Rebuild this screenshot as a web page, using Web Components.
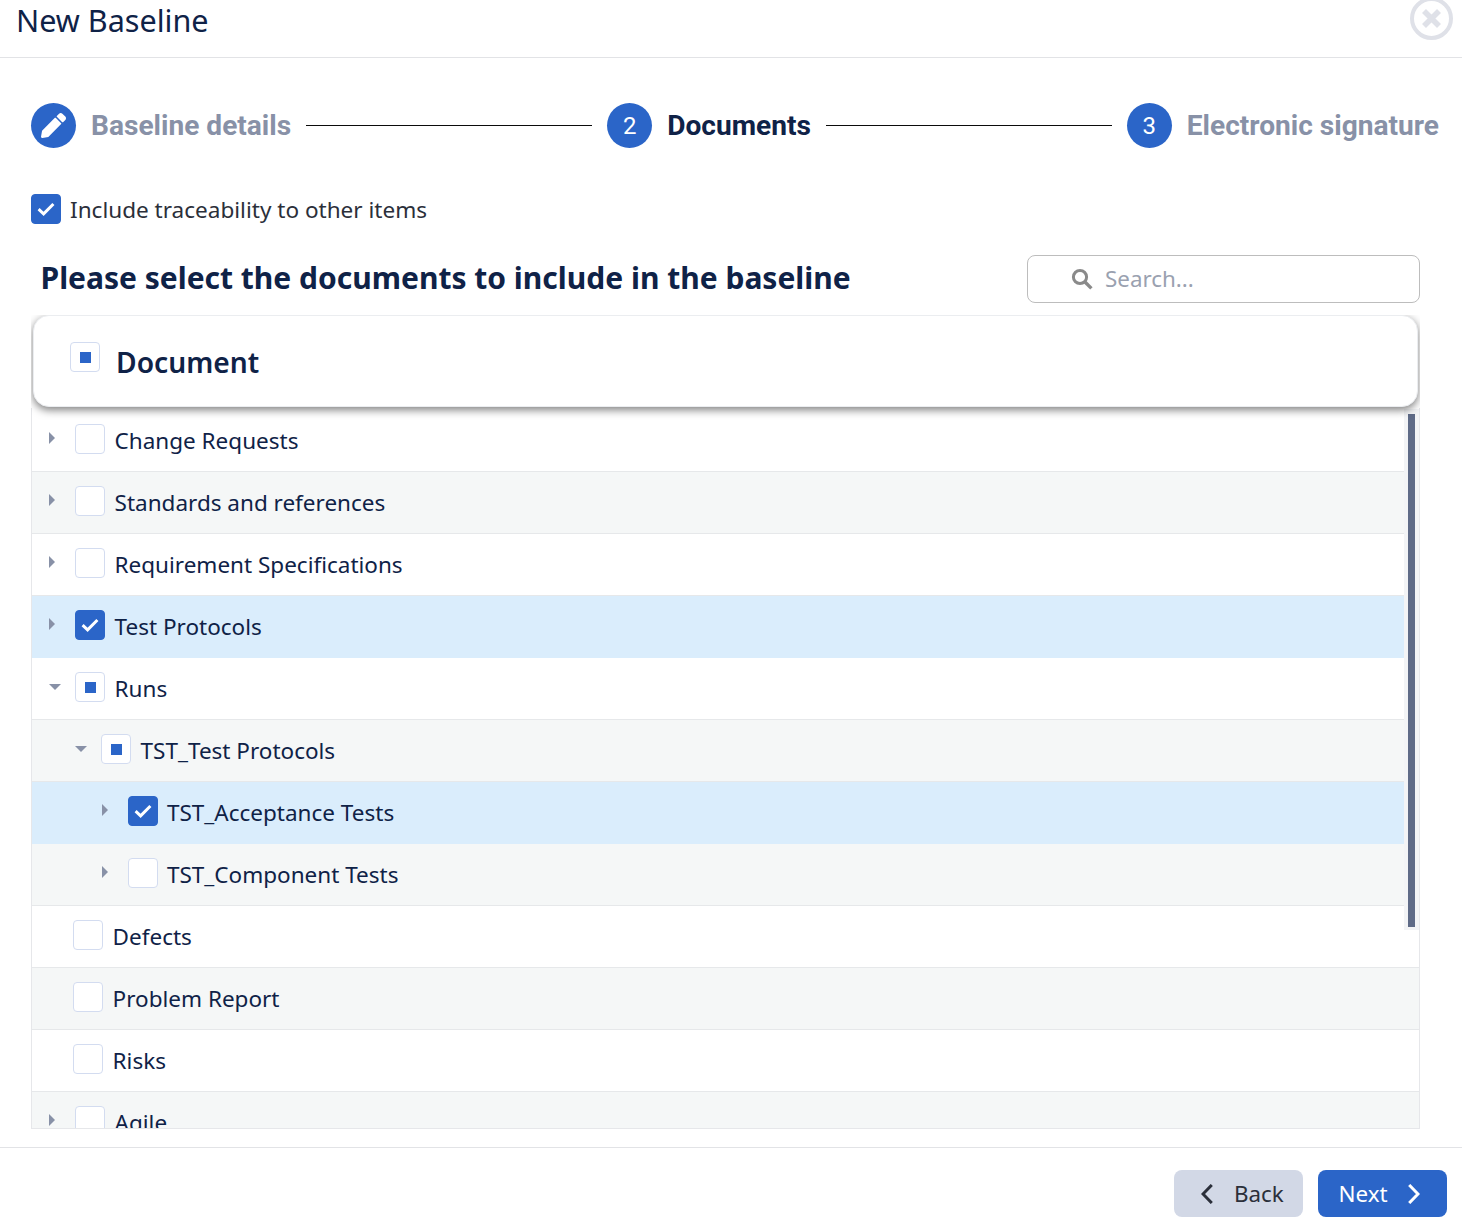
<!DOCTYPE html>
<html lang="en">
<head>
<meta charset="utf-8">
<title>New Baseline</title>
<style>
html,body{margin:0;padding:0;background:#fff}
body{font-family:"Noto Sans",sans-serif;color:#0f2247;width:1462px;height:1224px;overflow:hidden}
</style>
</head>
<body>
<bl-dialog>
  <bl-header slot="header">New Baseline</bl-header>
  <bl-stepper slot="stepper">
    <bl-step icon="pen">Baseline details</bl-step>
    <bl-step num="2" active>Documents</bl-step>
    <bl-step num="3">Electronic signature</bl-step>
  </bl-stepper>
  <bl-trace slot="trace">Include traceability to other items</bl-trace>
  <bl-title slot="title">Please select the documents to include in the baseline</bl-title>
  <bl-table slot="table">
    <bl-row caret="right" pad="17" state="none">Change Requests</bl-row>
    <bl-row caret="right" pad="17" state="none" tone="gray">Standards and references</bl-row>
    <bl-row caret="right" pad="17" state="none">Requirement Specifications</bl-row>
    <bl-row caret="right" pad="17" state="checked" tone="blue">Test Protocols</bl-row>
    <bl-row caret="down" pad="17" state="mixed">Runs</bl-row>
    <bl-row caret="down" pad="43" state="mixed" tone="gray">TST_Test Protocols</bl-row>
    <bl-row caret="right" pad="70" state="checked" tone="blue" gap="9">TST_Acceptance Tests</bl-row>
    <bl-row caret="right" pad="70" state="none" tone="gray" gap="9">TST_Component Tests</bl-row>
    <bl-row pad="41" state="none" wide>Defects</bl-row>
    <bl-row pad="41" state="none" tone="gray" wide>Problem Report</bl-row>
    <bl-row pad="41" state="none" wide>Risks</bl-row>
    <bl-row caret="right" pad="17" state="none" tone="gray" wide>Agile</bl-row>
  </bl-table>
  <bl-footer slot="footer"></bl-footer>
</bl-dialog>
<script>
const def=(name,css,html)=>{
  customElements.define(name,class extends HTMLElement{
    constructor(){super();this.attachShadow({mode:'open'});}
    connectedCallback(){
      this.shadowRoot.innerHTML=`<style>${css}</style>${typeof html==='function'?html(this):html}`;
    }
  });
};
const CHECK=`<svg width="18" height="14" viewBox="0 0 18 14" fill="none"><path d="M1.6 7.2l5 4.6L16.4 2" stroke="#fff" stroke-width="3"/></svg>`;

def('bl-check',`
:host{display:block;flex:none;width:30px;height:30px}
.b{box-sizing:border-box;width:30px;height:30px;border-radius:4px;border:1px solid #d3dcf0;background:#fff;display:flex;align-items:center;justify-content:center}
.checked{background:#2b65c8;border-color:#2b65c8}
.mixed i{display:block;width:11px;height:11px;background:#2b65c8}
`,h=>{const s=h.getAttribute('state')||'none';return `<div class="b ${s}">${s==='checked'?CHECK:s==='mixed'?'<i></i>':''}</div>`});

def('bl-dialog',`
:host{display:flex;flex-direction:column;height:1224px;position:relative;overflow:hidden}
.top{flex:none}
.body{flex:1;min-height:0;display:flex;flex-direction:column;padding:0 42px 0 31px}
.foot{flex:none}
`,`<div class="top"><slot name="header"></slot></div>
<div class="body"><slot name="stepper"></slot><slot name="trace"></slot><slot name="title"></slot><slot name="table"></slot></div>
<div class="foot"><slot name="footer"></slot></div>`);

def('bl-header',`
:host{display:block;box-sizing:border-box;height:58px;border-bottom:1px solid #e2e3e6;position:relative;padding-left:16px}
.t{font-size:30.55px;line-height:41px;font-weight:400;color:#0f2247;white-space:nowrap}
svg{position:absolute;left:1409px;top:-4px}
`,`<div class="t"><slot></slot></div>
<svg width="45" height="46" viewBox="0 0 45 46" fill="none"><circle cx="22.5" cy="22.5" r="19.5" stroke="#dfe1e8" stroke-width="4"/><path d="M15 15l15 15M30 15L15 30" stroke="#dfe1e8" stroke-width="5.6"/></svg>`);

def('bl-stepper',`
:host{display:flex;align-items:center;margin-top:45px;margin-right:-19px;height:45px}
::slotted(bl-step:not(:last-child)){flex:1 1 auto}
`,`<slot></slot>`);

def('bl-step',`
:host{display:flex;align-items:center;min-width:0}
.c{flex:none;width:45px;height:45px;border-radius:50%;background:#2b65c8;color:#fff;display:flex;align-items:center;justify-content:center;font:400 24px/1 Roboto,sans-serif}
.l{margin-left:15px;font:700 28.1px/45px Roboto,sans-serif;color:#8891a7;white-space:nowrap}
:host([active]) .l{color:#0f2247}
.line{flex:1;height:1px;background:#0b0b0b;margin:0 15px}
`,h=>`<div class="c">${h.getAttribute('icon')?`<svg width="25" height="25" viewBox="0 0 512 512"><path fill="#fff" d="M497.9 142.1l-46.1 46.1c-4.7 4.7-12.3 4.7-17 0l-111-111c-4.7-4.7-4.7-12.3 0-17l46.1-46.1c18.7-18.7 49.1-18.7 67.9 0l60.1 60.1c18.8 18.7 18.8 49.1 0 67.9zM284.2 99.8L21.6 362.4.4 483.9c-2.9 16.4 11.4 30.6 27.8 27.8l121.5-21.3 262.6-262.6c4.7-4.7 4.7-12.3 0-17l-111-111c-4.8-4.7-12.4-4.7-17.1 0z"/></svg>`:h.getAttribute('num')}</div><div class="l"><slot></slot></div>${h.nextElementSibling?'<div class="line"></div>':''}`);

def('bl-trace',`
:host{display:flex;align-items:center;margin-top:46px;gap:9px;height:30px}
.l{font-size:22.55px;line-height:32px;height:30px;color:#2b2f3a;white-space:nowrap}
`,`<bl-check state="checked"></bl-check><div class="l"><slot></slot></div>`);

def('bl-title',`
:host{display:flex;align-items:center;justify-content:space-between;margin-top:31px;height:48px;padding-left:9.5px}
.h{font-size:30px;font-weight:700;line-height:46px;height:48px;color:#0f2247;white-space:nowrap}
.s{box-sizing:border-box;width:393px;height:48px;border:1px solid #bdbdbd;border-radius:8px;display:flex;align-items:center;padding-left:43px;gap:12px;font-size:22.4px;line-height:44px;color:#9aa1b0}
`,`<div class="h"><slot></slot></div>
<div class="s"><svg width="22" height="22" viewBox="0 0 22 22" fill="none"><circle cx="9" cy="9" r="6.6" stroke="#8a8a8a" stroke-width="3"/><path d="M14 14l6.4 6.4" stroke="#8a8a8a" stroke-width="3.4"/></svg><span>Search...</span></div>`);

def('bl-table',`
:host{display:flex;flex-direction:column;flex:1;min-height:0;margin-top:12px;position:relative;overflow:hidden;margin-bottom:18px}
.head{flex:none;box-sizing:border-box;height:92px;margin:0 2px 1px 2px;background:#fff;border:1px solid #ebedf0;border-radius:16px;box-shadow:0 3px 8px rgba(0,0,0,.5);display:flex;align-items:center;padding-left:36px;position:relative;z-index:5;gap:16px}
.head bl-check{margin-bottom:8px}
.head span{font-size:28.2px;font-weight:600;color:#0f2247;line-height:42px;margin-top:2px}
.list{flex:1;min-height:0;overflow:hidden;box-sizing:border-box;border:1px solid #e6e7ea;border-top:none;padding-top:2px;position:relative}
.track{position:absolute;right:0;top:1px;height:521px;width:15px;background:#f3f4f6;z-index:3}
.thumb{position:absolute;right:4px;top:6px;height:513px;width:7px;background:#5f6b87;z-index:4}
`,`<div class="head"><bl-check state="mixed"></bl-check><span>Document</span></div>
<div class="list"><div class="track"></div><div class="thumb"></div><slot></slot></div>`);

def('bl-row',`
:host{display:flex;align-items:center;box-sizing:border-box;height:62px;border-bottom:1px solid #e6e8ea;position:relative;z-index:2;margin-right:15px;background:#fff;font-size:22.5px;color:#0f2247}
:host([wide]){margin-right:0}
:host([tone=gray]){background:#f5f7f7}
:host([tone=blue]){background:#daedfc;border-bottom-color:#daedfc}
.car{flex:none;width:0;height:0;overflow:visible}
.tr,.td{display:block;width:0;height:0;border-style:solid;margin-top:-9px}
.tr{border-width:6px 0 6px 6px;border-color:transparent transparent transparent #8891a7}
.td{border-width:6px 6px 0 6px;border-color:#8891a7 transparent transparent;margin-top:-5px;margin-left:0}
bl-check{margin-bottom:3px}
.t{white-space:nowrap;line-height:30px}
`,h=>{
 const pad=+h.getAttribute('pad'),c=h.getAttribute('caret');
 const gap=h.getAttribute('gap')||9.6;
 const box=c? (pad===17?43:pad===43?69:96):pad;
 return `<style>:host{padding-left:${pad}px}.c{margin-left:${box-pad}px}.t{margin-left:${gap}px}</style>
 ${c?`<div class="car"><span class="${c==='right'?'tr':'td'}"></span></div>`:''}<bl-check class="c" state="${h.getAttribute('state')}"></bl-check><div class="t"><slot></slot></div>`});

def('bl-footer',`
:host{display:flex;box-sizing:border-box;height:77px;border-top:1px solid #e2e3e6;justify-content:flex-end;align-items:flex-start;padding:22px 15px 0 0;gap:15px}
.b{box-sizing:border-box;width:129px;height:47px;border-radius:8px;display:flex;align-items:center;font-size:22.4px;line-height:47px}
.b span{height:47px}
.b svg{flex:none}
.back{background:#d2d8e6;color:#2b2f3a;padding-left:27px;gap:21px}
.next{background:#2b65c8;color:#fff;padding-left:20.5px;gap:20px}
`,`<div class="b back"><svg width="12" height="20" viewBox="0 0 12 20" fill="none"><path d="M10.8 1L2 10l8.8 9" stroke="#2b2f3a" stroke-width="3"/></svg><span>Back</span></div>
<div class="b next"><span>Next</span><svg width="12" height="20" viewBox="0 0 12 20" fill="none"><path d="M1.2 1L10 10l-8.8 9" stroke="#fff" stroke-width="3"/></svg></div>`);
</script>
</body>
</html>
